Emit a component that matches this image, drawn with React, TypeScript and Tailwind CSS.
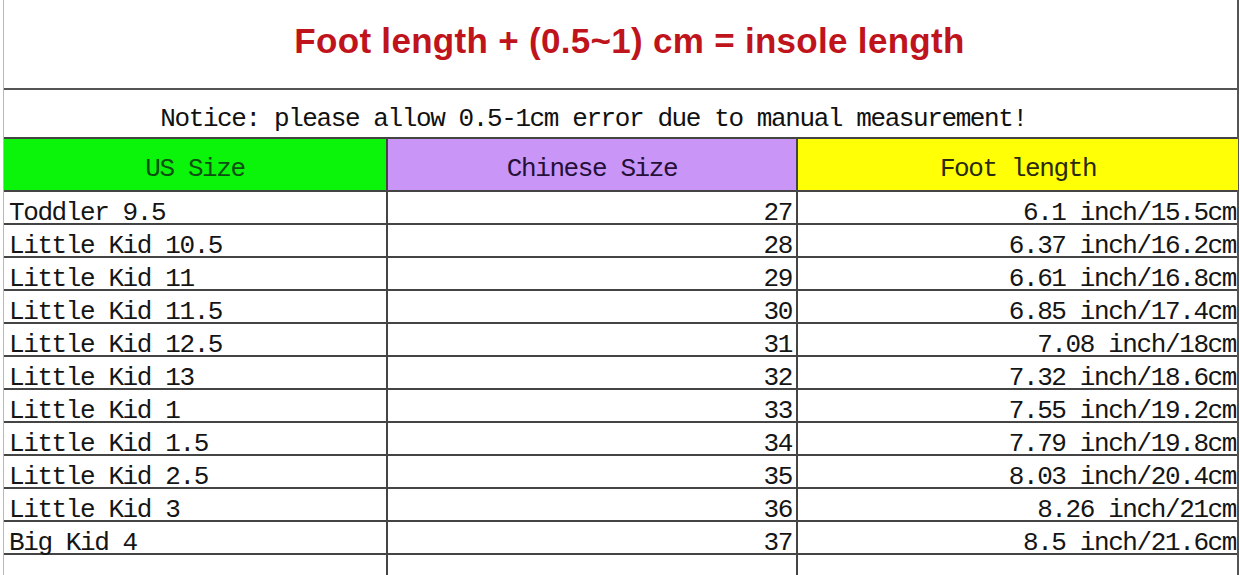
import React from "react"

const rows: [string, string, string][] = [
  ["Toddler 9.5", "27", "6.1 inch/15.5cm"],
  ["Little Kid 10.5", "28", "6.37 inch/16.2cm"],
  ["Little Kid 11", "29", "6.61 inch/16.8cm"],
  ["Little Kid 11.5", "30", "6.85 inch/17.4cm"],
  ["Little Kid 12.5", "31", "7.08 inch/18cm"],
  ["Little Kid 13", "32", "7.32 inch/18.6cm"],
  ["Little Kid 1", "33", "7.55 inch/19.2cm"],
  ["Little Kid 1.5", "34", "7.79 inch/19.8cm"],
  ["Little Kid 2.5", "35", "8.03 inch/20.4cm"],
  ["Little Kid 3", "36", "8.26 inch/21cm"],
  ["Big Kid 4", "37", "8.5 inch/21.6cm"],
]

const mono = { fontFamily: '"Liberation Mono", "DejaVu Sans Mono", monospace' }

export default function App() {
  return (
    <div className="w-[1240px] h-[575px] overflow-hidden bg-white">
      <div className="ml-[3px] w-[1236px] border-l border-r-2 border-l-[#b8b8b8] border-r-[#555] h-full">
        {/* Title */}
        <div className="h-[90px] flex items-center justify-center border-b-2 border-[#555]">
          <h1
            className="text-[35px] font-bold text-[#c0141c] tracking-[0.3px] pb-[6px] pl-[18px]"
            style={{ fontFamily: '"Liberation Sans", Arial, sans-serif' }}
          >
            Foot length + (0.5~1) cm = insole length
          </h1>
        </div>

        {/* Notice */}
        <div
          className="h-[49px] flex items-center justify-center pt-[10px] pr-[54px] text-[26px] tracking-[-1.4px] text-[#111] border-b-2 border-[#444] leading-none"
          style={mono}
        >
          Notice: please allow 0.5-1cm error due to manual measurement!
        </div>

        {/* Table */}
        <div className="text-[26px] tracking-[-1.4px] text-[#151515]" style={mono}>
          <div className="grid grid-cols-[384px_410px_440px] h-[53px] border-b-2 border-[#444] leading-none">
            <div className="bg-[#0bf50b] text-[#0d4f12] flex items-center justify-center pt-[9px] border-r-2 border-[#444]">
              US Size
            </div>
            <div className="bg-[#c995f7] text-[#241038] flex items-center justify-center pt-[9px] border-r-2 border-[#444]">
              Chinese Size
            </div>
            <div className="bg-[#ffff05] text-[#2a2a10] flex items-center justify-center pt-[9px]">
              Foot length
            </div>
          </div>

          {rows.map(([us, cn, foot]) => (
            <div key={us} className="grid grid-cols-[384px_410px_440px] h-[33px] border-b-2 border-[#444] leading-none">
              <div className="flex items-center pl-[5px] pt-[8px] border-r-2 border-[#444]">{us}</div>
              <div className="flex items-center justify-end pr-[4px] pt-[8px] border-r-2 border-[#444]">{cn}</div>
              <div className="flex items-center justify-end pr-[2px] pt-[8px]">{foot}</div>
            </div>
          ))}

          <div className="grid grid-cols-[384px_410px_440px] h-[33px]">
            <div className="border-r-2 border-[#444]" />
            <div className="border-r-2 border-[#444]" />
            <div />
          </div>
        </div>
      </div>
    </div>
  )
}
